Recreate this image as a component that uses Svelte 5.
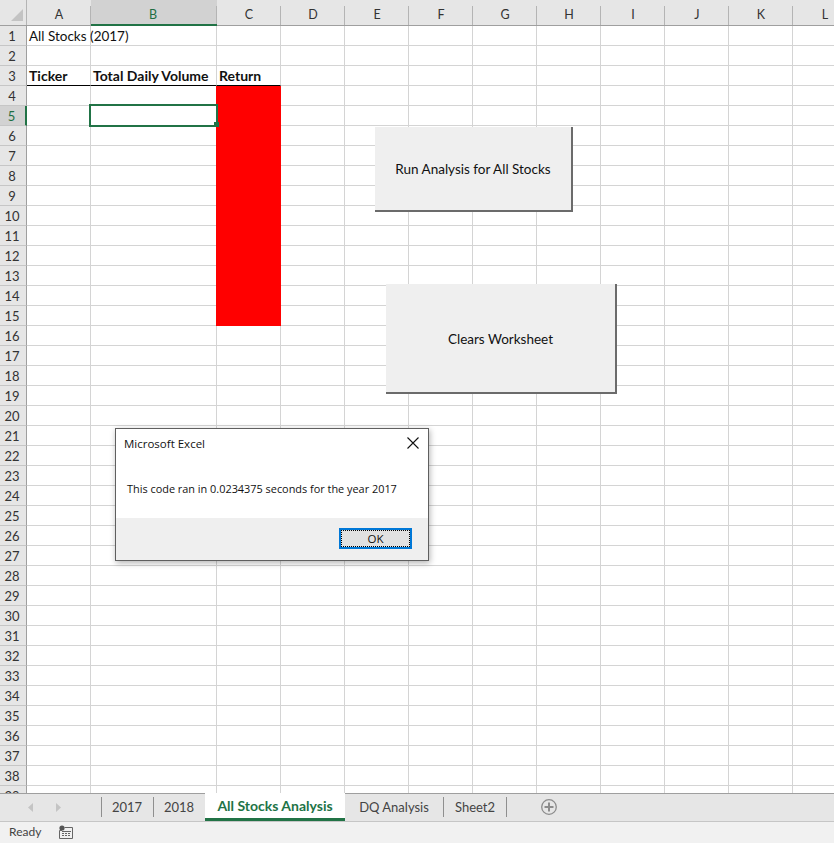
<script>
  const cols = ['A','B','C','D','E','F','G','H','I','J','K','L'];
  const rows = Array.from({ length: 39 }, (_, i) => i + 1);
  const cellText = {
    '1A': 'All Stocks (2017)',
    '3A': 'Ticker',
    '3B': 'Total Daily Volume',
    '3C': 'Return'
  };
  const tabsBefore = ['2017', '2018'];
  const tabsAfter = ['DQ Analysis', 'Sheet2'];
</script>

<div class="app">
  <div class="sheet">
    <div class="head">
      <div class="corner">
        <svg width="26" height="25" viewBox="0 0 26 25"><polygon points="11,21 23,21 23,9" fill="#c3c3c3"/></svg>
      </div>
      {#each cols as c}
        <div class="colhead" class:wide={c === 'B'} class:active={c === 'B'}>{c}</div>
      {/each}
    </div>

    {#each rows as r}
      <div class="row">
        <div class="rowhead" class:active={r === 5}>{r}</div>
        {#each cols as c}
          <div class="cell" class:wide={c === 'B'} class:bold={r === 3} class:under={r === 3 && 'ABC'.includes(c)}>
            {#if cellText[r + c]}<span>{cellText[r + c]}</span>{/if}
          </div>
        {/each}
      </div>
    {/each}

    <div class="fill"></div>
    <div class="selection"><i class="handle"></i></div>

    <div class="sbtn run">Run Analysis for All Stocks</div>
    <div class="sbtn clear">Clears Worksheet</div>

    <div class="dialog">
      <div class="dbody">
        <div class="dtitle">
          <span>Microsoft Excel</span>
          <svg width="12" height="12" viewBox="0 0 12 12"><path d="M0.5 0.5 L11.5 11.5 M11.5 0.5 L0.5 11.5" stroke="#111" stroke-width="1.1" fill="none"/></svg>
        </div>
        <div class="dmsg">This code ran in 0.0234375 seconds for the year 2017</div>
      </div>
      <div class="dfoot">
        <div class="ok"><div class="okin">OK</div></div>
      </div>
    </div>
  </div>

  <div class="tabbar">
    <div class="nav">
      <svg width="5" height="9" viewBox="0 0 5 9"><polygon points="5,0 5,9 0,4.5" fill="#c4c4c4"/></svg>
      <svg width="5" height="9" viewBox="0 0 5 9"><polygon points="0,0 0,9 5,4.5" fill="#c4c4c4"/></svg>
    </div>
    <div class="tabs">
      {#each tabsBefore as t}
        <div class="tab">{t}</div>
      {/each}
      <div class="tab current">All Stocks Analysis</div>
      <div class="tab dq">{tabsAfter[0]}</div>
      <div class="tab last">{tabsAfter[1]}</div>
    </div>
    <svg class="plus" width="18" height="18" viewBox="0 0 18 18">
      <circle cx="9" cy="9" r="7.3" fill="none" stroke="#8c8c8c" stroke-width="1.3"/>
      <path d="M9 4.5 V13.5 M4.5 9 H13.5" stroke="#8c8c8c" stroke-width="2" fill="none"/>
    </svg>
  </div>

  <div class="status">
    <span class="ready">Ready</span>
    <svg class="macro" width="14" height="14" viewBox="0 0 14 14">
      <circle cx="3" cy="3" r="2.6" fill="#555"/>
      <path d="M5.5 2.5 H13.5 V13.5 H0.5 V5.5 M0.5 5.5 H3" fill="none" stroke="#666" stroke-width="1"/>
      <path d="M3 6 H12 V7 H3 Z M3 8 H5 V9 H3 Z M6 8 H8 V9 H6 Z M9 8 H11 V9 H9 Z M3 10 H5 V11 H3 Z M6 10 H8 V11 H6 Z M9 10 H11 V11 H9 Z" fill="#666"/>
    </svg>
  </div>
</div>

<style>
  :global(body) { margin: 0; background: #fff; }
  .app {
    width: 834px;
    height: 843px;
    display: flex;
    flex-direction: column;
    overflow: hidden;
    font-family: Lato, "Open Sans", sans-serif;
    color: #111;
  }
  .sheet {
    position: relative;
    height: 793px;
    overflow: hidden;
    flex-shrink: 0;
  }
  .head {
    display: flex;
    height: 26px;
    background: #e6e6e6;
    border-bottom: 1px solid #9f9f9f;
    box-sizing: border-box;
  }
  .corner {
    width: 27px;
    flex: 0 0 27px;
    box-sizing: border-box;
    border-right: 1px solid #b4b4b4;
    height: 25px;
  }
  .colhead {
    position: relative;
    flex: 0 0 64px;
    width: 64px;
    box-sizing: border-box;
    text-align: center;
    font-size: 12.5px;
    line-height: 30px;
    height: 25px;
    color: #333;
  }
  .colhead::after {
    content: "";
    position: absolute;
    right: 0;
    top: 6px;
    bottom: 0;
    width: 1px;
    background: #b4b4b4;
  }
  .colhead.wide { flex-basis: 126px; width: 126px; padding-right: 2px; }
  .colhead.active {
    background: #d2d2d2;
    color: #1f6e43;
    height: 26px;
    margin-bottom: -1px;
    border-bottom: 2px solid #217346;
  }
  .row {
    display: flex;
    height: 20px;
  }
  .rowhead {
    flex: 0 0 27px;
    width: 27px;
    box-sizing: border-box;
    background: #e6e6e6;
    border-right: 1px solid #9f9f9f;
    border-bottom: 1px solid #c6c6c6;
    text-align: center;
    padding-right: 2px;
    font-size: 13px;
    line-height: 21px;
    color: #333;
  }
  .rowhead.active {
    background: #d2d2d2;
    color: #1f6e43;
    border-right: 2px solid #217346;
  }
  .cell {
    flex: 0 0 64px;
    width: 64px;
    box-sizing: border-box;
    border-right: 1px solid #d4d4d4;
    border-bottom: 1px solid #d4d4d4;
    font-size: 13.5px;
    line-height: 21px;
    padding-left: 2px;
    white-space: nowrap;
    color: #111;
  }
  .cell.wide { flex-basis: 126px; width: 126px; }
  .cell.bold { font-weight: 700; font-size: 14px; line-height: 20px; }
  .cell.under { border-bottom-color: #000; }
  .fill {
    position: absolute;
    left: 216px;
    top: 86px;
    width: 65px;
    height: 240px;
    background: #ff0000;
  }
  .selection {
    position: absolute;
    left: 89px;
    top: 104px;
    width: 129px;
    height: 23px;
    box-sizing: border-box;
    border: 2px solid #217346;
  }
  .handle {
    position: absolute;
    right: -3px;
    bottom: -2px;
    width: 5px;
    height: 5px;
    background: #217346;
  }
  .sbtn {
    position: absolute;
    box-sizing: border-box;
    background: #efefef;
    border-right: 2px solid #6b6b6b;
    border-bottom: 2px solid #6b6b6b;
    display: flex;
    align-items: center;
    justify-content: center;
    font-size: 13.5px;
    color: #111;
  }
  .run { left: 375px; top: 127px; width: 198px; height: 85px; }
  .clear { left: 386px; top: 284px; width: 231px; height: 110px; padding-top: 1px; }
  .dialog {
    position: absolute;
    left: 115px;
    top: 428px;
    width: 314px;
    height: 133px;
    box-sizing: border-box;
    border: 1px solid #5f5f5f;
    background: #fff;
    box-shadow: 1px 2px 6px rgba(0, 0, 0, 0.3);
    display: flex;
    flex-direction: column;
    font-family: "Open Sans", "Noto Sans", sans-serif;
    font-size: 10.9px;
    color: #111;
  }
  .dbody { flex: 1; padding: 8px 9px 0 8px; }
  .dtitle {
    display: flex;
    justify-content: space-between;
    align-items: flex-start;
    font-size: 11.5px;
    height: 14px;
    line-height: 13px;
    margin-bottom: 30px;
  }
  .dmsg { padding-left: 3px; line-height: 16px; white-space: nowrap; }
  .dfoot {
    height: 42px;
    background: #efefef;
    display: flex;
    justify-content: flex-end;
    align-items: flex-start;
    padding: 10px 16px 0 0;
    box-sizing: border-box;
  }
  .ok {
    width: 73px;
    height: 21px;
    box-sizing: border-box;
    border: 2px solid #0078d7;
    background: #e1e1e1;
  }
  .okin {
    height: 100%;
    box-sizing: border-box;
    border: 1px dotted #000;
    display: flex;
    align-items: center;
    justify-content: center;
    font-size: 11.5px;
  }
  .tabbar {
    position: relative;
    height: 29px;
    flex-shrink: 0;
    box-sizing: border-box;
    background: #e6e6e6;
    border-top: 1px solid #9f9f9f;
    border-bottom: 1px solid #c6c6c6;
    display: flex;
  }
  .nav {
    width: 101px;
    box-sizing: border-box;
    display: flex;
    align-items: center;
    gap: 23px;
    padding-left: 28px;
  }
  .tabs { display: flex; height: 28px; margin-top: -1px; }
  .tab {
    position: relative;
    height: 27px;
    box-sizing: border-box;
    display: flex;
    align-items: center;
    justify-content: center;
    font-size: 13px;
    color: #444;
    width: 52px;
  }
  .tab::before {
    content: "";
    position: absolute;
    left: 0;
    top: 4px;
    height: 20px;
    width: 1px;
    background: #8f8f8f;
  }
  .tab.current {
    width: 140px;
    background: #fff;
    color: #217346;
    font-weight: 700;
    font-size: 14px;
    border-bottom: 3px solid #217346;
    height: 28px;
  }
  .tab.current::before,
  .tab.dq::before { display: none; }
  .tab.dq { width: 98px; }
  .tab.last { width: 64px; }
  .tab.last::after {
    content: "";
    position: absolute;
    right: 0;
    top: 4px;
    height: 20px;
    width: 1px;
    background: #8f8f8f;
  }
  .plus { margin: 4px 0 0 33px; }
  .status {
    height: 21px;
    background: #f1f1f1;
    display: flex;
    align-items: center;
    font-size: 12px;
    color: #444;
  }
  .ready { padding-left: 9px; width: 50px; padding-bottom: 2px; }
  .macro { margin-bottom: 2px; }
</style>
